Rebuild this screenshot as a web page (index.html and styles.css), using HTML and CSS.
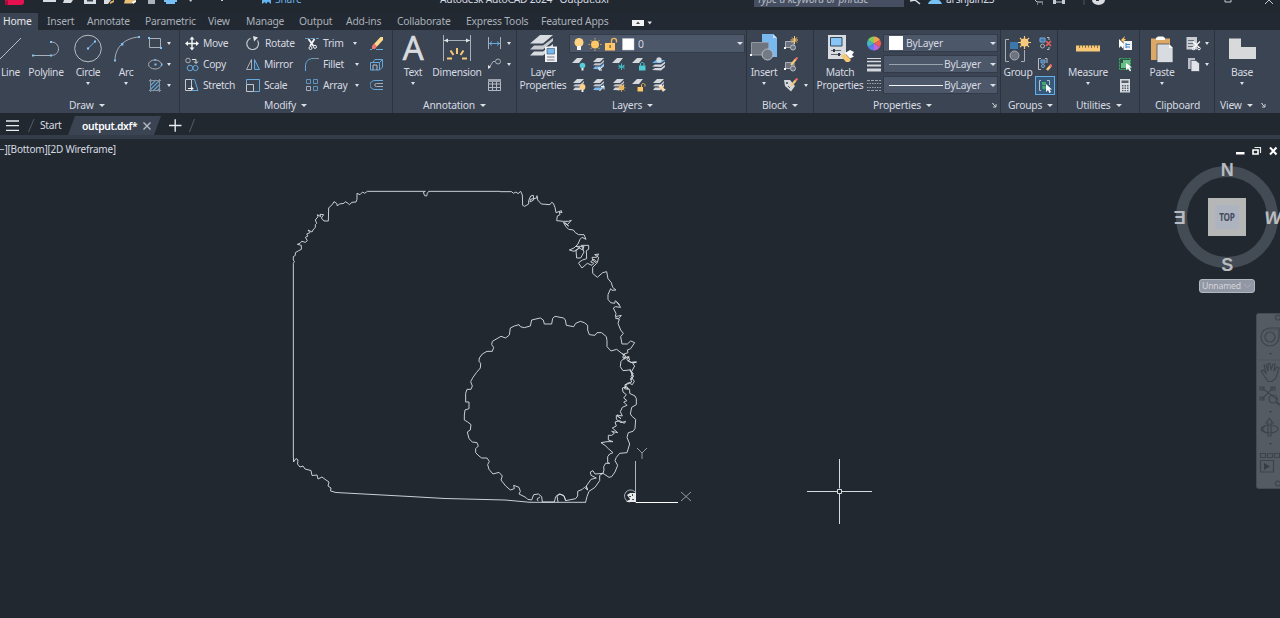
FILE: index.html
```html
<!DOCTYPE html>
<html lang="en">
<head>
<meta charset="utf-8">
<title>Autodesk AutoCAD 2024 - Output.dxf</title>
<link rel="stylesheet" href="styles.css">
</head>
<body>
<svg width="0" height="0" class="defs">
  <symbol id="sheet" viewBox="0 0 14 14"><path d="M0 6 5 1H11L7 6Z" fill="#d4d7db"/></symbol>
  <symbol id="sheets" viewBox="0 0 14 14"><path d="M1 5 5 1H12L8 5Z" fill="#d4d7db"/><path d="M1 8.300 3 6.200H8.500L12 3V5L8 8.500Z" fill="#c0c4ca"/><path d="M1 12 3 9.600H8.500L12 6V8.500L8 12.300Z" fill="#d4d7db"/></symbol>
  <symbol id="sheets-blue" viewBox="0 0 14 14"><path d="M1 5 5 1H12L8 5Z" fill="#d4d7db"/><path d="M1 8.300 3 6.200H8.500L12 3V5L8 8.500Z" fill="#c0c4ca"/><path d="M1 12 3 9.600H8.500L12 6V8.500L8 12.300Z" fill="#79b9ef"/></symbol>
  <symbol id="block" viewBox="0 0 14 14"><path d="M1.500 4.500H10V10.500H1.500Z" fill="#6b727d" stroke="#a9afb8"/><circle cx="9" cy="10.500" r="2.500" fill="#6b727d" stroke="#b9bec6"/><path d="M0 10h2v2H0Z" fill="#fff"/></symbol>
</svg>

<header class="titlebar">
  <svg width="240" height="8" viewBox="0 0 240 8"><path d="M5 0H24V3.500L22 5H5Z" fill="#e51050"/><path d="M5 1 8 0V5H5Z" fill="#a80c3c"/><path d="M43 0H56V2H43ZM64 0H73L71 3H63ZM84 0H96V4H84Z" fill="#d8dbdf"/><path d="M87 0H93V1.500H87Z" fill="#39424f"/><path d="M104 0H111L108 4H104Z" fill="#d8dbdf"/><path d="M110 2 114 0V2L110 4Z" fill="#e9b65c"/><path d="M125 0H136L132 3.500H124Z" fill="#e9c077"/><path d="M132 2 136 0V2L133 4Z" fill="#fff"/><path d="M148 0H155V4H148Z" fill="#aeb3ba"/><path d="M164 0H177V2H175V4H166V2H164Z" fill="#79c1f5"/><path d="M189 0H192L191 2ZM221 0H223V1H221Z" fill="#c9cdd3"/></svg>
  <svg class="share-icon" width="12" height="8" viewBox="261 0 12 8"><path d="M262 0H271V4L268 1.500 266 4 265 2 262 4Z" fill="#63b4f0"/></svg>
  <span class="share">Share</span>
  <span class="title">Autodesk AutoCAD 2024 &nbsp; Output.dxf</span>
  <span class="search"><i>Type a keyword or phrase</i></span>
  <svg width="36" height="8" viewBox="907 0 36 8"><path d="M910 1 915 0 920 4" stroke="#d9dce0" stroke-width="1.500" fill="none"/><path d="M928 4C929 1 931 0 932 0H938C940 0 941 2 942 4Z" fill="#79c1f5"/></svg>
  <span class="user">arshjain23</span>
  <svg class="wincontrols" width="250" height="8" viewBox="1030 0 250 8"><path d="M1033 0 1035 2H1041M1035 4h1M1040 4h1M1052 2H1063M1223 0V2H1229V0M1263 4 1267 0 1271 4" stroke="#c8ccd2" fill="none"/><path d="M1051 0h3v4h-3ZM1060 0h3v4h-3Z" fill="#c8ccd2"/><path d="M1082 0V5" stroke="#4c5563"/><path d="M1090 0H1103A6.500 5 0 0 1 1090 0Z" fill="#d9dce0"/><path d="M1094 0h3v1h-3Z" fill="#333"/></svg>
</header>

<nav class="tabs">
  <a class="on" style="width:38px">Home</a><a style="width:40px">Insert</a><a style="width:58px">Annotate</a><a style="width:63px">Parametric</a><a style="width:38px">View</a><a style="width:53px">Manage</a><a style="width:47px">Output</a><a style="width:51px">Add-ins</a><a style="width:69px">Collaborate</a><a style="width:75px">Express Tools</a><a style="width:99px">Featured Apps</a>
  <svg width="22" height="8" viewBox="631 17 22 8"><path d="M632 19H644V25H632Z" fill="#f1f2f4"/><path d="M636 23 638 20.500 640 23Z" fill="#444"/><path d="M647.500 20.500H652L649.750 23.500Z" fill="#dfe2e6"/></svg>
</nav>

<section class="ribbon">
  <div class="panel draw">
    <div class="body">
      <div class="big" style="width:21px"><svg width="21" height="32" viewBox="0 32 21 32"><path d="M-1 60 23 36" stroke="#b9bec6"/><path d="M22 35h2v2h-2Z" fill="#7cc4f5"/></svg><span>Line</span></div>
      <div class="big" style="width:50px"><svg width="32" height="32" viewBox="31 32 32 32"><path d="M34 55.500H52C62 55.500 62 42 52 42" stroke="#a9afb8" fill="none"/><path d="M33 54.500h2v2h-2ZM51 54.500h2v2h-2ZM51 41h2v2h-2Z" fill="#7cc4f5"/></svg><span>Polyline</span></div>
      <div class="big" style="width:34px"><svg width="30" height="32" viewBox="73 32 30 32"><circle cx="88" cy="48.500" r="13.300" stroke="#b9bec6" fill="none"/><path d="M88 48.500 95 41.500" stroke="#68aee0"/><path d="M87 47.500h2v2h-2ZM94 40.500h2v2h-2Z" fill="#8bcdf8"/></svg><span>Circle</span><b class="dn"></b></div>
      <div class="big" style="width:42px"><svg width="30" height="32" viewBox="111 32 30 32"><path d="M115 60.500C115 48 124 38 139 37" stroke="#a9afb8" fill="none"/><path d="M114 59.500h2v2h-2ZM121 43h2.400v2.400H121ZM138 36h2v2h-2Z" fill="#7cc4f5"/></svg><span>Arc</span><b class="dn"></b></div>
      <div class="rows two" style="grid-template-columns:20px 8px">
        <svg width="16" height="15" viewBox="147 36 16 15"><path d="M149.500 38.500H160.500V47.500H149.500Z" stroke="#a9afb8" fill="none"/><path d="M148 37h2v2h-2ZM160 47h2v2h-2Z" fill="#7cc4f5"/></svg><b class="dn"></b>
        <svg width="16" height="15" viewBox="145 57 16 15"><ellipse cx="153" cy="64.500" rx="6.500" ry="4.500" stroke="#a9afb8" fill="none"/><path d="M152.500 63.500h2v2h-2ZM152.500 59h1.500v1.500h-1.500ZM159 63.500h1.500v2H159Z" fill="#7cc4f5"/></svg><b class="dn"></b>
        <svg width="16" height="15" viewBox="145 78 16 15"><path d="M148 82 150 80M148 86 154 80M148 90 158 80M151 91 158 84M155 91 158 88" stroke="#65a2cf" stroke-width="1.300"/><path d="M148.500 79V92M157.500 79V92M147 80.500H159M147 90.500H159" stroke="#8a929e" fill="none"/></svg><b class="dn"></b>
      </div>
    </div>
    <div class="caption">Draw<b class="dn w"></b></div>
  </div>

  <div class="panel modify">
    <div class="body">
      <div class="rows" style="grid-template-columns:18px 43px 18px 41px 18px 30px 17px 15px">
        <svg width="14" height="15" viewBox="185 36 14 15"><path d="M192 38V49M186.500 43.500H197.500" stroke="#f4f5f6" stroke-width="1.400"/><path d="M189.500 39.500 192 36.500 194.500 39.500ZM189.500 47.500 192 50.500 194.500 47.500ZM188 41 185 43.500 188 46ZM196 41 199 43.500 196 46Z" fill="#f4f5f6"/></svg><span>Move</span>
        <svg width="14" height="15" viewBox="246 36 14 15"><path d="M250.500 38.300A5.800 5.800 0 1 0 257.500 40.500" stroke="#c3c8cf" stroke-width="1.200" fill="none"/><path d="M253 36 258 37.500 254 41.500Z" fill="#e2e5e8"/></svg><span class="nudge">Rotate</span>
        <svg width="14" height="15" viewBox="305 36 14 15"><path d="M305 38.500H319" stroke="#6798bd" stroke-dasharray="4 1.500"/><path d="M308.500 39 313.500 46M314.500 39 310 46" stroke="#f4f5f6" stroke-width="1.800"/><circle cx="310.500" cy="48" r="1.500" stroke="#f4f5f6" fill="none"/><circle cx="315" cy="46.800" r="1.500" stroke="#f4f5f6" fill="none"/></svg><span>Trim</span><b class="dn"></b>
        <svg width="14" height="15" viewBox="370 36 14 15"><path d="M374 44 380.500 37H383V40L376.500 47Z" fill="#ffd98b"/><path d="M374 43.500 377 46.500 375 49H372V46Z" fill="#ee7770"/><path d="M376 49.500H383M370 49.500H372" stroke="#68aee0"/></svg>
        <svg width="14" height="15" viewBox="185 57 14 15"><circle cx="188" cy="60.500" r="2.300" stroke="#a9afb8" fill="none"/><path d="M192 59.500H196V63M194 61.500 196 63.500 198 61.500" stroke="#e3e5e8" fill="none"/><circle cx="190" cy="68" r="2.800" stroke="#65a9dc" fill="none"/><circle cx="195.500" cy="68" r="2.600" stroke="#65a9dc" fill="none"/></svg><span>Copy</span>
        <svg width="14" height="15" viewBox="246 57 14 15"><path d="M251.500 59.500V69.500H246.500Z" stroke="#a9afb8" fill="none"/><path d="M254.500 59.500V69.500H259.500Z" stroke="#65a9dc" fill="#36526c"/></svg><span>Mirror</span>
        <svg width="14" height="15" viewBox="305 57 14 15"><path d="M305.500 71V66C305.500 61 309 58.500 313 58.500" stroke="#65a9dc" fill="none"/><path d="M313 58.500H319" stroke="#8a929e"/></svg><span>Fillet</span><b class="dn s"></b>
        <svg width="14" height="15" viewBox="370 57 14 15"><path d="M370.500 62.500H379.500V70H370.500ZM373 62 375 59.500H382.500V67L379.500 70M379.500 62.500 382.500 59.500" stroke="#65a9dc" fill="none"/><path d="M373 65h4v5M373 65v5" stroke="#b9bec6" fill="none"/></svg>
        <svg width="14" height="15" viewBox="185 78 14 15"><path d="M185.500 79.500H191.500V90.500H185.500Z" stroke="#c3c8cf" fill="none"/><path d="M192 79.500H194.500L198 90.500H192" stroke="#65a9dc" fill="none"/><path d="M188 88.500H193M191 86.500 193 88.500 191 90.500" stroke="#fff" fill="none"/></svg><span>Stretch</span>
        <svg width="14" height="15" viewBox="246 78 14 15"><path d="M246.500 84V79.500H259.500V91.500H254" stroke="#65a9dc" fill="none"/><path d="M246.500 84.500H253.500V91.500H246.500Z" stroke="#c3c8cf" fill="none"/></svg><span>Scale</span>
        <svg width="14" height="15" viewBox="305 78 14 15"><path d="M306.500 79.500h4v4h-4ZM313.500 79.500h4v4h-4ZM313.500 86.500h4v4h-4Z" stroke="#5e94bd" fill="none"/><path d="M306.500 86.500h4v4h-4Z" stroke="#a9afb8" fill="none"/></svg><span>Array</span><b class="dn s"></b>
        <svg width="14" height="15" viewBox="370 78 14 15"><path d="M383 80.500H375A5 4.500 0 0 0 375 89.500H383" stroke="#65a9dc" fill="none"/><path d="M383 83.500H376.500A1.800 1.500 0 0 0 376.500 86.500H383" stroke="#a9afb8" fill="none"/></svg>
      </div>
    </div>
    <div class="caption">Modify<b class="dn w"></b></div>
  </div>

  <div class="panel annotation">
    <div class="body">
      <div class="big" style="width:40px"><em class="glyph">A</em><span>Text</span><b class="dn"></b></div>
      <div class="big" style="width:48px"><svg width="30" height="32" viewBox="442 32 30 32"><path d="M443.500 35V61M470.500 35V61M444 40.500H470" stroke="#a9afb8"/><path d="M444 40.500 448 38.500V42.500ZM470 40.500 466 38.500V42.500Z" fill="#e2e5e8"/><path d="M457 48V54M450.500 50.500 453.500 55M463.500 50.500 460.500 55M447 58.500H452M462 58.500H467" stroke="#f7c878" stroke-width="2"/></svg><span>Dimension</span></div>
      <div class="rows two" style="grid-template-columns:20px 8px">
        <svg width="15" height="15" viewBox="486 36 15 15"><path d="M487.500 37V49M499.500 37V49" stroke="#a9afb8"/><path d="M488 43.500H499M491 41.500 488.500 43.500 491 45.500M496 41.500 498.500 43.500 496 45.500" stroke="#65a9dc" fill="none"/></svg><b class="dn"></b>
        <svg width="15" height="15" viewBox="486 57 15 15"><circle cx="497" cy="61.500" r="2.500" stroke="#a9afb8" fill="none"/><path d="M494 61.500H492L488 68" stroke="#a9afb8" fill="none"/><path d="M487 69v-4l3 2Z" fill="#e2e5e8"/></svg><b class="dn"></b>
        <svg width="15" height="15" viewBox="486 78 15 15"><path d="M487.500 79.500H499.500V90.500H487.500ZM487.500 84H499.500M487.500 87.500H499.500M491.500 82V90.500M495.500 82V90.500" stroke="#b4bac2" fill="none"/><path d="M487 79H500V82H487Z" fill="#9aa1ab"/></svg>
      </div>
    </div>
    <div class="caption">Annotation<b class="dn w"></b></div>
  </div>

  <div class="panel layers">
    <div class="body">
      <div class="big" style="width:46px"><svg width="30" height="32" viewBox="528 32 30 32"><path d="M530 43.500 540 35H553L543 43.500Z" fill="#d8dbdf"/><path d="M530 49.500 534 45.500H543L553 38V41L543 49.500Z" fill="#c7cbd0"/><path d="M530 55.500 534 51.500H543L553 44V47L543 55.500Z" fill="#d8dbdf"/><path d="M545 46.500H557V62H545Z" fill="#f0f1f3"/><path d="M547 48.500H554.500V54H547Z" fill="#74b7ee" stroke="#34495e" stroke-width=".6"/><path d="M547 57H554.500M547 60H554.500" stroke="#555c66" stroke-width=".8"/></svg><span>Layer<br>Properties</span></div>
      <div class="stack">
        <div class="combo layer"><svg width="66" height="16" viewBox="570 35 66 16"><circle cx="579" cy="41.500" r="4.500" fill="#ffd183"/><path d="M577 45H581V49H577Z" fill="#f4f5f6"/><circle cx="595" cy="43.500" r="4" fill="#ffc766"/><path d="M595 37V38.500M595 48.500V50M588.500 43.500H590M600 43.500H601.500M590.500 39 592 40.500M599.500 39 598 40.500M590.500 48 592 46.500M599.500 48 598 46.500" stroke="#d9a858"/><path d="M605 42H615V49.500H605Z" fill="#ffc766"/><path d="M611.500 42V40C611.500 36.500 616.500 36.500 616.500 40V41.500" stroke="#e9b65c" fill="none" stroke-width="1.400"/><path d="M609.500 44h1.200v3h-1.200Z" fill="#6d5529"/><path d="M622.500 37.500H634V49H622.500Z" fill="#fff" stroke="#c9cdd3" stroke-width=".5"/></svg><span>0</span><b class="dn w"></b></div>
        <div class="icons">
          <svg width="14" height="14"><use href="#sheet"/><circle cx="10.500" cy="8.500" r="2.800" fill="#58cbd8"/><path d="M9.500 11h2v2.500h-2Z" fill="#eee"/></svg>
          <svg width="14" height="14"><use href="#sheets-blue"/><path d="M7.500 12.500 12 8.500M7 10v3h3" stroke="#fff" fill="none"/></svg>
          <svg width="14" height="14"><use href="#sheet"/><path d="M9.500 6.500V13M6.500 8 12.500 11.500M12.500 8 6.500 11.500M6.500 9.700H12.500" stroke="#42bcc4"/></svg>
          <svg width="14" height="14"><use href="#sheet"/><path d="M7 8.500H13.500V13.500H7Z" fill="#4ecbd4"/><path d="M8.500 8.500V7C8.500 5 12 5 12 7V8.500" stroke="#4ecbd4" fill="none"/></svg>
          <svg width="14" height="14"><path d="M0 6 4 3H13L9 6Z" fill="#63b4f0"/><path d="M0 9.500 3 7.500H9L13 4.500V6.500L9 10ZM0 13 3 11H9L13 8V10L9 13.500Z" fill="#d4d7db"/><circle cx="7" cy="3" r="2.700" fill="#d4d7db"/></svg>
          <svg width="14" height="14"><use href="#sheets"/><circle cx="10.500" cy="9" r="2.900" fill="#ffd183"/><path d="M9.500 11.500h2V14h-2Z" fill="#eee"/></svg>
          <svg width="14" height="14"><use href="#sheets-blue"/><path d="M7.500 13 12 8.500M9 8.500h3v3" stroke="#fff" fill="none"/></svg>
          <svg width="14" height="14"><use href="#sheets"/><circle cx="9.500" cy="9.800" r="2.500" fill="#ffc766"/><path d="M9.500 5.500V14M5.500 9.800H13.500M6.500 7 12.500 12.500M12.500 7 6.500 12.500" stroke="#e2b05a" stroke-width=".8"/></svg>
          <svg width="14" height="14"><use href="#sheet"/><path d="M5.500 9H11V13.500H5.500Z" fill="#ffc766"/><path d="M9.500 9V7C9.500 5 13 5 13 7V8.500" stroke="#e9b65c" fill="none"/></svg>
          <svg width="14" height="14"><use href="#sheets"/><path d="M6.500 8.500 9.500 7 13 11.500 11 13.500Z" fill="#ffdc9c"/><path d="M7 8 10 7M11 13.500 13.500 11" stroke="#fff"/></svg>
        </div>
      </div>
    </div>
    <div class="caption">Layers<b class="dn w"></b></div>
  </div>

  <div class="panel block">
    <div class="body">
      <div class="big" style="width:30px"><svg width="28" height="32" viewBox="751 32 28 32"><path d="M763 34H774L778 38V57H763Z" fill="#79b9ef"/><path d="M774 34V38H778Z" fill="#c4e1f8"/><path d="M752.500 42.500H769.500V55H752.500Z" fill="#6e757f" stroke="#9299a3"/><circle cx="768.500" cy="54.500" r="5.500" fill="#747b85" stroke="#b9bec6"/><path d="M751 54h2v2h-2Z" fill="#fff"/></svg><span>Insert</span><b class="dn"></b></div>
      <div class="rows two" style="grid-template-columns:20px 8px">
        <svg width="14" height="15"><use href="#block" width="14" height="14" y="1"/><path d="M10.500 0V8M6.500 4H14M8 1.500 13 6.500M13 1.500 8 6.500" stroke="#ffc766"/></svg><i></i>
        <svg width="14" height="15"><use href="#block" width="14" height="14" y="1"/><path d="M7 8 12 2" stroke="#f7c878" stroke-width="2"/><path d="M11.500 2.500 13.500 .5" stroke="#ee6a65" stroke-width="2"/></svg><i></i>
        <svg width="14" height="15"><path d="M0 2H6L11 8 7 13.500 1 8Z" fill="#d4d7db"/><circle cx="3" cy="5" r="1" fill="#3b4453"/><path d="M7 8 12 2" stroke="#f7c878" stroke-width="2"/><path d="M11.500 2.500 13.500 .5" stroke="#ee6a65" stroke-width="2"/><path d="M4 8 6 10" stroke="#555"/></svg><b class="dn"></b>
      </div>
    </div>
    <div class="caption">Block<b class="dn w"></b></div>
  </div>

  <div class="panel props">
    <div class="body">
      <div class="big" style="width:46px"><svg width="30" height="32" viewBox="825 32 30 32"><path d="M828 35H846V59H828Z" fill="#d8dbdf"/><path d="M830.500 37.500H842V46H830.500Z" fill="#86c5f5" stroke="#34495e"/><path d="M831 50.500H841M831 54.500H841" stroke="#5e646e"/><path d="M833 49h2v3h-2ZM838 53h2v3h-2Z" fill="#2f363f"/><path d="M841 56 845 53.500 851 60 849 62H846Z" fill="#f7c878"/><path d="M845 53 850 50 854 52 852 55 854 56.500 850 58.500Z" fill="#fff"/></svg><span>Match<br>Properties</span></div>
      <div class="rows one">
        <svg width="14" height="15" viewBox="0 0 14 15"><path d="M7 7.500V.5A7 7 0 0 1 13 4Z" fill="#f2a24c"/><path d="M7 7.500 13 4A7 7 0 0 1 13 11Z" fill="#ef5d54"/><path d="M7 7.500 13 11A7 7 0 0 1 7 14.500Z" fill="#c063d4"/><path d="M7 7.500V14.500A7 7 0 0 1 1 11Z" fill="#5c7df2"/><path d="M7 7.500 1 11A7 7 0 0 1 1 4Z" fill="#42b7c4"/><path d="M7 7.500 1 4A7 7 0 0 1 7 .5Z" fill="#80cc5f"/></svg>
        <svg width="14" height="15"><path d="M0 1.500H14" stroke="#d4d7db"/><path d="M0 4.500H14" stroke="#d4d7db" stroke-width="1.500"/><path d="M0 8.500H14" stroke="#d4d7db" stroke-width="2"/><path d="M0 13H14" stroke="#d4d7db" stroke-width="3"/></svg>
        <svg width="14" height="15"><path d="M0 2.500H14M0 12.500H14" stroke="#9aa1ab" stroke-dasharray="3 1"/><path d="M0 5.500H14M0 9.500H14" stroke="#9aa1ab" stroke-dasharray="1.500 1"/></svg>
      </div>
      <div class="combos">
        <div class="combo color"><em></em><span>ByLayer</span><b class="dn w"></b></div>
        <div class="combo line"><hr><span>ByLayer</span><b class="dn w"></b></div>
        <div class="combo line bright"><hr><span>ByLayer</span><b class="dn w"></b></div>
      </div>
    </div>
    <div class="caption">Properties<b class="dn w"></b><svg class="corner" width="7" height="7"><path d="M1.500 2V1.500H2.500M2 2 5 5M5 2V5H2" stroke="#c9cdd3" fill="none"/></svg></div>
  </div>

  <div class="panel groups">
    <div class="body">
      <div class="big" style="width:32px"><svg width="30" height="32" viewBox="1003 32 30 32"><path d="M1009 39.500H1005.500V61.500H1009M1021 61.500H1024.500V50" stroke="#a9afb8" fill="none"/><path d="M1010 42H1018V49H1010Z" fill="#3c78ad"/><circle cx="1014.500" cy="55.500" r="4.500" fill="#6e757f" stroke="#a9afb8"/><circle cx="1024.500" cy="42.500" r="4" fill="#ffd183"/><path d="M1024.500 36V49M1018 42.500H1031M1020 38 1029 47M1029 38 1020 47" stroke="#f7c878" stroke-width="1.200"/></svg><span>Group</span></div>
      <div class="rows one">
        <svg width="14" height="15"><path d="M9 1.500H11V4M9 13.500H11V11" stroke="#b9bec6" fill="none"/><path d="M2 2h5v4H2Z" fill="#3c78ad" stroke="#78a9cf"/><circle cx="4.500" cy="10" r="2" stroke="#a9afb8" fill="none"/><path d="M8 5 13 10M13 5 8 10" stroke="#ee5d5d" stroke-width="1.600"/></svg>
        <svg width="14" height="15"><path d="M3 1.500H.5V12.500H3M7 1.500H9V6" stroke="#b9bec6" fill="none"/><path d="M3 3h4v3H3Z" fill="#3c78ad" stroke="#78a9cf"/><circle cx="5" cy="9" r="1.500" stroke="#78a9cf" fill="none"/><path d="M9 13 12.500 9" stroke="#f7c878" stroke-width="2.500"/><path d="M12 9.500 13.500 7.500" stroke="#ee6a65" stroke-width="2.500"/></svg>
        <div class="picked"><svg width="14" height="15"><path d="M3 2.500H1.500V12.500H3M9 2.500H11.500V7" stroke="#b9bec6" fill="none"/><path d="M4 4h4v3H4Z" fill="#46a86a"/><circle cx="6" cy="9.500" r="2" fill="#46a86a"/><path d="M8 6V14L10 12 11.500 15 13 14 11.500 11.500H14Z" fill="#fff"/></svg></div>
      </div>
    </div>
    <div class="caption">Groups<b class="dn w"></b></div>
  </div>

  <div class="panel utilities">
    <div class="body">
      <div class="big" style="width:40px"><svg width="26" height="32" viewBox="1075 32 26 32"><path d="M1076 45.500H1100V51.500H1076Z" fill="#f7c878"/><path d="M1079.500 45V48M1082.500 45V47.500M1085.500 45V48M1088.500 45V47.500M1091.500 45V48M1094.500 45V47.500M1097.500 45V48" stroke="#6d5b37" stroke-width=".8"/></svg><span>Measure</span><b class="dn"></b></div>
      <div class="rows one">
        <svg width="14" height="15"><path d="M5.500 5H14V14H5.500Z" fill="#f0f1f3"/><path d="M8 7v5M8 8.500h4M8 11h4" stroke="#3683c4" fill="none"/><path d="M1 3V12L3 10 4.500 12.500 5.500 11 6 8Z" fill="#fff"/><path d="M3 4 7 0 6 3H8L5 6Z" fill="#ffc766"/></svg>
        <svg width="14" height="15"><path d="M1.500 1.500H12.500V12.500H1.500Z" stroke="#3fae66" fill="#2c5449" stroke-dasharray="2 1"/><path d="M5 3H12V9H9V11H3V6H5Z" fill="#68c086"/><path d="M8 6V13L10 11.500 12 14.500 13 13.500 11.500 10.500H14Z" fill="#fff"/></svg>
        <svg width="14" height="15"><path d="M2 1H12V14.500H2Z" fill="#d8dbdf"/><path d="M3.500 2.500H10.500V5H3.500ZM4 7h1.500v1.500H4ZM6.500 7H8v1.500H6.500ZM9 7h1.500v1.500H9ZM4 9.500h1.500V11H4ZM6.500 9.500H8V11H6.500ZM9 9.500h1.500V11H9ZM4 12h1.500v1.200H4ZM6.500 12H8v1.200H6.500ZM9 12h1.500v1.200H9Z" fill="#56606c"/></svg>
      </div>
    </div>
    <div class="caption">Utilities<b class="dn w"></b></div>
  </div>

  <div class="panel clip">
    <div class="body">
      <div class="big" style="width:36px"><svg width="26" height="32" viewBox="1149 32 26 32"><path d="M1151 38.500H1170V60H1151Z" fill="#dda765"/><path d="M1156 40V38L1158 36.500H1163L1165 38V40Z" fill="#fff"/><path d="M1157 44H1169L1173 48V62.500H1157Z" fill="#d8dbdf" stroke="#3b4453" stroke-width=".7"/><path d="M1169 44V48H1173Z" fill="#fff"/></svg><span>Paste</span><b class="dn"></b></div>
      <div class="rows two" style="grid-template-columns:19px 8px">
        <svg width="15" height="15"><path d="M.5 1H11V13.500H.5Z" fill="#c9ccd1"/><path d="M2 4.500H8M2 7.500H7M2 10.500H7" stroke="#66707d"/><path d="M7 5.500 13 11.500M14 5.500 8 11.500" stroke="#fff" stroke-width="1.100"/><circle cx="7.500" cy="12.500" r="1.300" stroke="#fff" fill="none"/><circle cx="13" cy="12.500" r="1.300" stroke="#fff" fill="none"/></svg><b class="dn"></b>
        <svg width="15" height="15"><path d="M2 1H9V12H2Z" fill="#b9bec6"/><path d="M5 3.500H10L13.500 6.500V14.500H5Z" fill="#e2e5e8" stroke="#3b4453" stroke-width=".7"/></svg><b class="dn"></b>
      </div>
    </div>
    <div class="caption">Clipboard</div>
  </div>

  <div class="panel view">
    <div class="body">
      <div class="big" style="width:30px"><svg width="28" height="32" viewBox="1228 32 28 32"><path d="M1229 38.500H1241V47H1256V59H1229Z" fill="#d8d9da"/></svg><span>Base</span><b class="dn"></b></div>
    </div>
    <div class="caption">View<b class="dn w"></b><svg class="corner" width="7" height="7"><path d="M1.500 2V1.500H2.500M2 2 5 5M5 2V5H2" stroke="#c9cdd3" fill="none"/></svg></div>
  </div>
</section>

<nav class="files">
  <svg width="40" height="22" viewBox="0 113 40 22"><path d="M6 121H19M6 125.700H19M6 130.300H19" stroke="#e8eaed" stroke-width="1.300"/><path d="M28.500 132 34 119" stroke="#535c69"/></svg>
  <span class="start">Start</span>
  <div class="file"><span>output.dxf*</span><svg width="10" height="10"><path d="M1.500 1.500 8.500 8.500M8.500 1.500 1.500 8.500" stroke="#b4bac2" stroke-width="1.400"/></svg></div>
  <svg width="36" height="22" viewBox="161 113 36 22"><path d="M169 125.500H181.500M175.200 119.300V131.700" stroke="#e8eaed" stroke-width="1.400"/><path d="M189.500 132 194.500 119" stroke="#535c69"/></svg>
</nav>

<main class="canvas">
  <svg class="drawing" width="1280" height="479" viewBox="0 139 1280 479">
    <g class="trace">
      <path transform="translate(280 180) scale(.33333)" d="M40 834V250L43 245 40 240V230L46 226V218L56 212 64 208V196L52 193 60 190 65 184 76 187 82 182 76 172 84 168 80 162 90 158 84 150 96 156 99 150 106 142V134L110 130 106 120 114 110 112 104 122 110 120 103 131 104 124 114 132 123 145 123 146 84 158 72 162 65 170 70 172 78 178 72 192 70 196 65 204 70 208 74 216 67 228 66 231 58V40L240 44 248 36 254 40 262 34H436L430 37 434 47 440 48 442 40 446 34H660"/>
      <path transform="translate(500 180) scale(.33333)" d="M0 35H35L40 40 48 36 54 41 62 34 67 45 68 76 74 79 86 72V62L92 48 100 46 101 60 90 66 91 58 110 54 111 47 113 60 124 72 150 74 155 67 160 70 165 82 168 98 184 92 186 98 178 96 180 104 172 108 170 122 190 124 205 124 214 121 202 134 194 128 206 138 190 127 198 140 206 148 220 150 226 158 236 164 252 164 258 178 246 172 240 178 234 192 222 204 208 210 222 214 240 203 228 199 252 199 248 210 238 204 228 212 230 234 242 234 252 216 246 200 244 196H266V208L259 212 260 236 248 240 238 246 236 250 246 264 262 250 276 256 282 250 272 246 278 240 276 232 290 232 296 222 284 224 296 232 292 248 282 238 278 240 290 250 278 262 278 280 292 292 308 278 320 275 324 296 334 308 338 322 348 330 336 331 332 326 324 344 324 358 332 368 344 370 346 362 358 374 350 365 362 382 346 380 340 384 348 400 346 410 364 406 356 416 346 414 358 418 354 430 362 450 370 460 362 470 366 492 382 492 392 483 404 488 392 506 382 510 384 518 372 522 368 532 388 531 380 538 392 548 402 546H410L398 550 404 558 394 576 390 568 398 590 394 600"/>
      <path transform="translate(455 300) scale(.33333)" d="M510 165 500 160 485 148 468 153 456 140V122L454 110 440 98 426 98 420 106 403 104 398 90V76L388 68 376 64 362 70 356 80 334 76 331 60 326 54 300 49 293 55 290 72H268L265 60 256 54 230 60 226 78 208 83 196 80 192 74 178 78 166 84 163 105 152 114 138 109 112 124 110 134 116 142 112 154 96 154 82 162 73 174 72 184 77 190 76 204 64 218 54 232 47 245 52 258 48 268 36 268 32 280V306H42V326L30 330 28 345V360L38 366 48 374 46 390 37 396 42 416 52 426 66 428 70 438 62 446 62 458 72 468 80 474 96 474 103 484 98 494 102 508 114 522 132 517 142 528 138 540 152 558 166 570 178 566 176 556 192 562 196 574 192 582 212 592 218 598 230 600 236 584 250 582 260 590 262 606H298L302 590 312 582 326 586 332 602 362 596 368 588V574L382 568 388 562 398 570 394 558 408 538 424 534 408 526 406 516 414 512 420 522 444 520 447 510 446 500 452 490H464L458 488V470L464 462 474 458 460 446 450 436 438 428 456 425 474 425 460 420 460 406 470 406 478 400 470 394 488 398 472 384 484 378 480 366 494 362 508 370 512 364 498 368 484 358 484 346 498 356 486 345 502 348 496 335 502 322 516 316 506 306 516 302 506 294 514 284 504 276 502 264 516 260 520 268 508 266 516 250 530 246 526 236 536 230 530 216"/>
      <path transform="translate(455 300) scale(.33333)" d="M510 172 498 184 496 200 504 212 524 210 534 220 528 230 538 244 532 254 524 250 510 254V262L524 268V280L540 288 544 296V314L530 322 526 342 532 350 542 358 540 386 534 394 520 398 516 412 524 432 516 458 494 460 484 472 480 482 488 496 480 516 470 530 462 532 444 520 434 526V542L420 562 402 574 396 590 392 606M398 570 392 558M500 160 512 168 506 178 520 170 524 180 518 182 530 187H543"/>
      <path d="M293.500 458V462L296 458.500 298 460 297.500 464 300 467 303 466 305 469 311 470.500 312 475.500 317 475 318 479 322 477 326 480 329 482 328 486 331 488 330.500 491 336 492.500 410 496.500 445 498.500 505 500 530 502.300H586"/>
      <path d="M558 502 557 496 560 494 564 496 566 501M540 497 537 499 538 501"/>
    </g>
    <g fill="none" stroke="#aeb4bc"><path d="M635.500 461V502.500"/><path d="M636 502.500H678" stroke="#fff"/><path d="M635 492A6 6 0 1 0 630 502"/><path d="M637 448 642 453 647 448M642 453V459M681 492 691 501M691 492 681 501" stroke="#949aa3"/></g>
    <path d="M627 495 630 493H636V502H626L630 499Z" fill="#e8e9eb"/><path d="M629 496h2v1h-2M632 494h1v2h-1M632 499h2v1h-2M629 499h1v1h-1" fill="#444b55"/>
    <path class="cross" d="M839.500 459V488.500M839.500 494V524M807 491.500H837M842 491.500H872M837.500 489.500H841.500V493.500H837.500Z"/>
  </svg>
  <span class="viewlabel">−][Bottom][2D Wireframe]</span>
  <svg class="mdi" width="44" height="12" viewBox="1236 145 44 12"><path d="M1236 152H1244.500V154.500H1236Z" fill="#fff"/><path d="M1254.500 147.500H1260.500V153" stroke="#e6e8ea" stroke-width="1.200" fill="none"/><path d="M1253 150H1258V154H1253Z" stroke="#fff" stroke-width="1.600" fill="none"/><path d="M1270 147.500 1276.500 154.500M1276.500 147.500 1270 154.500" stroke="#fff" stroke-width="2"/></svg>
  <div class="compass">
    <b class="n">N</b><b class="s">S</b><b class="e">E</b><b class="w">W</b>
    <div class="cube"><span><i>TOP</i></span></div>
  </div>
  <div class="ucs">Unnamed<svg width="9" height="6"><path d="M1 1 4.500 4.500 8 1" stroke="#a9aeb9" fill="none"/></svg></div>
  <svg class="navbar" width="24" height="176" viewBox="1256 313 24 176"><rect x="1256.500" y="313.500" width="30" height="175" rx="2" fill="#545b63" stroke="#444b54"/><g stroke="#3c444e" fill="none" stroke-width="1.200"><path d="M1262 330H1280M1256 360H1280" stroke="#4d545c"/><circle cx="1278" cy="317.500" r="2.500"/><circle cx="1278" cy="483.500" r="2.500"/><path d="M1270 328H1279V337A9 9 0 1 1 1270 328Z"/><circle cx="1270" cy="337" r="5"/><path d="M1265 377 1261 371 1263 370 1266 373 1264 365H1266L1268 371 1268 363.500H1270L1271 370 1273 364H1275L1274 371 1277 367 1279 368 1276 378 1272 381.500H1268ZM1262 388 1278 400M1274 387 1262 399M1260 387h4v3h-4ZM1260 397h4v3h-4ZM1271 387h4v3h-4Z"/><circle cx="1273" cy="399" r="4"/><path d="M1276 402 1280 405" stroke-width="2"/><ellipse cx="1269.500" cy="429" rx="8.500" ry="4"/><path d="M1268 436V423H1266L1269.500 418.500 1273 423H1271V436ZM1265 426 1262 429 1265 432M1260.500 453.500h5v4h-5ZM1267.500 453.500h5v4h-5ZM1274.500 453.500h5v4h-5ZM1260.500 460.500H1273.500V472H1260.500Z"/></g><path d="M1264 463 1270 466.500 1264 470ZM1269 353h3l-1.500 2ZM1269 411h3l-1.500 2ZM1269 443h3l-1.500 2Z" fill="#363e48"/></svg>
</main>
</body>
</html>
```

FILE: styles.css
```css
* { box-sizing: border-box; }
body {
  margin: 0;
  width: 1280px;
  height: 618px;
  overflow: hidden;
  background: #212830;
  color: #d6dae0;
  font: 10.3px/14px "Noto Sans", "Open Sans", sans-serif;
  letter-spacing: -0.32px;
  white-space: nowrap;
}
svg { display: block; flex: none; overflow: hidden; }
.defs { position: absolute; }

/* Arrow markers */
.dn { display: block; width: 0; height: 0; border: 2px solid transparent; border-top: 3px solid #dce0e5; border-bottom: 0; }
.dn.w { border-width: 3.5px 3.5px 0; }
.dn.s { margin-left: 2px; }

/* Title bar */
.titlebar { display: flex; height: 13px; overflow: hidden; background: #212830; }
.titlebar span { height: 14px; margin-top: -8px; flex: none; letter-spacing: -0.2px; }
.titlebar .share-icon { margin-left: 21px; }
.titlebar .share { width: 165px; padding-left: 2px; color: #69b0e6; }
.titlebar .title { width: 316px; padding-left: 2px; letter-spacing: -0.27px; }
.titlebar .search { width: 150px; height: 15px; padding-left: 3px; background: #454f61; color: #b6bcc6; }
.titlebar svg + .user { width: 86px; margin-left: 3px; }
.titlebar .search + svg { margin-left: 3px; }

/* Ribbon tabs */
.tabs { display: flex; align-items: center; height: 17px; background: #222932; color: #aab0b9; }
.tabs a { height: 17px; line-height: 17px; padding-left: 9px; flex: none; letter-spacing: -0.2px; }
.tabs .on { padding-left: 3px; background: #3b4453; color: #e4e7ea; }

/* Ribbon */
.ribbon { display: flex; height: 83px; background: #3b4453; }
.panel { display: flex; flex-direction: column; flex: none; border-right: 1px solid #2c333e; }
.body { display: flex; height: 67px; }
.caption { display: flex; align-items: center; height: 16px; line-height: 16px; letter-spacing: -0.2px; }
.caption .dn { margin-left: 5px; }
.corner { margin-left: auto; }
.big { display: flex; flex-direction: column; align-items: center; flex: none; padding-top: 2px; text-align: center; }
.big svg, .big .glyph { height: 32px; }
.big span { line-height: 13px; margin-top: 2px; }
.big .dn { margin-top: 3px; }
.glyph { font: 33px/32px "Open Sans", "Noto Sans", sans-serif; color: #d8dbdf; -webkit-text-stroke: .7px #d8dbdf; }
.rows { display: grid; grid-auto-rows: 21px; align-content: start; align-items: center; padding-top: 3px; flex: none; }
.rows > span { line-height: 14px; margin-top: -1px; }
.rows .nudge { margin-left: 1px; }
.one { grid-template-columns: 14px; }

.draw { width: 180px; }
.draw .caption { padding-left: 69px; }
.modify { width: 213px; }
.modify .rows { padding-left: 5px; }
.modify .caption { padding-left: 84px; }
.annotation { width: 124px; }
.annotation .two { padding-left: 6px; }
.annotation .caption { padding-left: 30px; }
.layers { width: 230px; }
.layers .body { padding-left: 3px; }
.layers .caption { padding-left: 95px; }
.block { width: 67px; }
.block .body { padding-left: 2px; }
.block .rows { padding-left: 5px; }
.block .caption { padding-left: 15px; }
.props { width: 187px; }
.props .body { padding-left: 3px; }
.props .one { padding-left: 4px; }
.props .caption { padding: 0 2px 0 59px; }
.groups { width: 57px; }
.groups .body { padding-left: 1px; }
.groups .one { padding-left: 4px; }
.groups .caption { padding-left: 7px; }
.utilities { width: 82px; }
.utilities .body { padding-left: 10px; }
.utilities .one { padding-left: 10px; }
.utilities .caption { padding-left: 18px; }
.clip { width: 75px; }
.clip .body { padding-left: 4px; }
.clip .rows { padding-left: 6px; }
.clip .caption { padding-left: 15px; }
.view { width: 65px; border: 0; }
.view .body { padding-left: 12px; }
.view .caption { padding-left: 5px; }
.view .corner { margin-left: 7px; }

.combo { display: flex; align-items: center; height: 18px; background: #4c576a; border: 1px solid #333b48; padding-right: 1px; }
.combo .dn { margin-left: auto; }
.stack { padding: 4px 0 0 3px; }
.layer { width: 176px; height: 19px; }
.layer span { margin-left: 2px; }
.icons { display: grid; grid-template-columns: repeat(5, 20px); grid-auto-rows: 21px; padding: 4px 0 0 3px; }
.combos { display: grid; grid-auto-rows: 18px; row-gap: 3px; padding: 4px 0 0 2px; align-content: start; }
.combos .combo { width: 115px; letter-spacing: -0.2px; }
.color em { width: 14px; height: 14px; margin: 0 3px 0 5px; background: #fff; }
.line hr { width: 54px; height: 0; margin: 0 1px 0 5px; border: 0; border-top: 1px solid #9ba3af; }
.bright hr { border-color: #f4f5f6; }
.picked { width: 20px; height: 19px; margin-left: -3px; padding: 1px 0 0 2px; background: #34597b; border: 1px solid #62aee8; }

/* File tabs */
.files { display: flex; align-items: center; height: 26px; background: #212830; border-bottom: 4px solid #343c49; }
.files .start { width: 28px; line-height: 22px; padding-top: 2px; }
.file { display: flex; align-items: center; width: 93px; height: 19px; margin-top: 3px; padding-left: 14px; background: #3b4453; clip-path: polygon(7px 0, 100% 0, 86px 100%, 0 100%); font-weight: 600; color: #fff; }
.file span { width: 60px; }

/* Model space */
.canvas { position: relative; height: 479px; background: #212830; }
.trace path { fill: none; stroke: #dfe2e6; stroke-width: 1px; vector-effect: non-scaling-stroke; stroke-linejoin: round; opacity: .9; }
.cross { fill: none; stroke: #d7dadd; }
.viewlabel { position: absolute; left: -1px; top: 3px; font-size: 10px; letter-spacing: -0.23px; }
.mdi { position: absolute; right: 0; top: 6px; }
.compass { position: absolute; left: 1176px; top: 27px; width: 102px; height: 102px; border: 11px solid #434b55; border-radius: 50%; }
.compass b { position: absolute; width: 20px; text-align: center; font: bold 18px/20px "Liberation Sans", sans-serif; color: #b9bbbe; }
.compass .n { left: 30px; top: -17px; }
.compass .s { left: 30px; top: 78px; }
.compass .e { left: -17px; top: 30px; transform: rotate(180deg); }
.compass .w { left: 76px; top: 31px; transform: skewX(-8deg); }
.cube { display: flex; align-items: center; justify-content: center; width: 38px; height: 38px; margin: 21px 0 0 21px; background: #b5b6b6; }
.cube span { width: 24px; height: 24px; background: #adb3bf; color: #434b5b; text-align: center; font: bold 10px/24px "Noto Sans", sans-serif; }
.cube i { display: block; font-style: normal; transform: scaleX(.82); }
.ucs { position: absolute; left: 1199px; top: 140px; display: flex; align-items: center; gap: 2px; width: 56px; height: 14px; padding-left: 2px; border: 1px solid #b3b6bf; border-radius: 3px; background: #9297a5; color: #d2d4d9; font-size: 8.7px; letter-spacing: -0.2px; }
.navbar { position: absolute; right: 0; top: 174px; }
```
